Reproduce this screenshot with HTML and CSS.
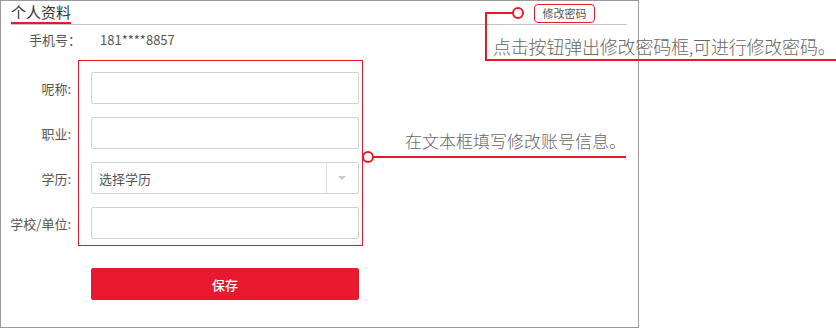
FILE: index.html
```html
<!DOCTYPE html>
<html>
<head>
    <meta charset="utf-8">
    <title>个人资料</title>
    <link rel="stylesheet" href="styles.css">
</head>
<body>
    <div class="panel">
        <div class="head">
            <span class="title">个人资料</span>
            <button class="pwd-btn">修改密码</button>
        </div>

        <div class="phone">
            <span class="phone-label">手机号：</span>
            <span>181****8857</span>
        </div>

        <div class="form">
            <div class="row">
                <label>呢称:</label>
                <input class="field" type="text">
            </div>
            <div class="row">
                <label>职业:</label>
                <input class="field" type="text">
            </div>
            <div class="row">
                <label>学历:</label>
                <div class="field select">
                    <span class="select-text">选择学历</span>
                    <span class="select-arrow"></span>
                </div>
            </div>
            <div class="row">
                <label>学校/单位:</label>
                <input class="field" type="text">
            </div>
            <div class="row save-row">
                <label></label>
                <button class="save">保存</button>
            </div>
        </div>
    </div>

    <!-- annotation callouts -->
    <div class="mark-box"></div>
    <svg class="callouts" width="836" height="328" viewBox="0 0 836 328">
        <g fill="none" stroke="#e8192c" stroke-width="2">
            <polyline points="513,13 486,13 486,60 836,60" />
            <circle cx="518" cy="13" r="5" fill="#fff" />
            <line x1="373" y1="157" x2="626" y2="157" />
            <circle cx="368" cy="157" r="5" fill="#fff" />
        </g>
    </svg>
    <div class="note note-pwd">点击按钮弹出修改密码框,可进行修改密码。</div>
    <div class="note note-form">在文本框填写修改账号信息。</div>
</body>
</html>
```

FILE: styles.css
```css
body {
    margin: 0;
    font-family: "Noto Sans CJK SC", "Liberation Sans", sans-serif;
    color: #555;
    background: #fff;
    position: relative;
    width: 836px;
    height: 328px;
}

.panel {
    width: 637px;
    height: 326px;
    border: 1px solid #999;
}

.head {
    display: flex;
    justify-content: space-between;
    align-items: flex-start;
    height: 23px;
    margin: 0 11px 0 10px;
    border-bottom: 1px solid #c4c4c4;
}

.title {
    display: block;
    height: 21px;
    line-height: 21px;
    font-size: 15px;
    color: #333;
    border-bottom: 2px solid #e8192c;
}

.pwd-btn {
    margin: 3px 32px 0 0;
    width: 61px;
    height: 19px;
    padding: 0;
    border: 1px solid #e8192c;
    border-radius: 4px;
    background: #fff;
    font-family: inherit;
    font-size: 11px;
    line-height: 17px;
    color: #555;
}

.phone {
    display: flex;
    margin: 5px 0 0 28px;
    height: 20px;
    line-height: 20px;
    font-size: 13px;
}

.phone-label {
    width: 71px;
}

.form {
    margin-top: 22px;
}

.row {
    display: flex;
    align-items: center;
    gap: 20px;
    margin-bottom: 13px;
}

.row label {
    width: 70px;
    text-align: right;
    font-size: 13px;
}

.field {
    box-sizing: border-box;
    width: 268px;
    height: 32px;
    border: 1px solid #d2d2d2;
    border-radius: 2px;
    margin: 0;
    background: #fff;
}

.select {
    display: flex;
    align-items: center;
}

.select-text {
    flex: 1;
    padding-left: 7px;
    font-size: 13px;
    color: #555;
}

.select-arrow {
    width: 31px;
    height: 30px;
    border-left: 1px solid #ddd;
    position: relative;
}

.select-arrow::after {
    content: "";
    position: absolute;
    left: 11px;
    top: 13px;
    border-left: 4px solid transparent;
    border-right: 4px solid transparent;
    border-top: 4px solid #c8c8c8;
}

.save-row {
    margin-top: 29px;
}

.save {
    width: 268px;
    height: 32px;
    border: none;
    border-radius: 2px;
    background: #e8192f;
    color: #fff;
    font-family: inherit;
    font-size: 13px;
    font-weight: 500;
}

.mark-box {
    position: absolute;
    left: 78px;
    top: 60px;
    width: 283px;
    height: 184px;
    border: 1px solid #e8192c;
}

.callouts {
    position: absolute;
    left: 0;
    top: 0;
}

.note {
    position: absolute;
    font-size: 17px;
    font-weight: 300;
    line-height: 20px;
    color: #666;
    white-space: nowrap;
}

.note-pwd {
    left: 493px;
    top: 36px;
    font-size: 18px;
    letter-spacing: -0.2px;
}

.note-form {
    left: 405px;
    top: 131px;
}
```
